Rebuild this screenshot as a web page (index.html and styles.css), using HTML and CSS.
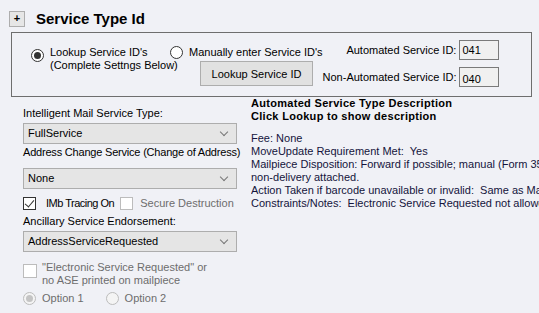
FILE: index.html
```html
<!DOCTYPE html>
<html lang="en">
<head>
    <meta charset="UTF-8">
    <title>Service Type Id</title>
    <link rel="stylesheet" href="styles.css">
</head>
<body>
    <div class="header">
        <button class="expand-btn">+</button>
        <h1 class="title">Service Type Id</h1>
    </div>

    <div class="group-box">
        <div class="col-lookup">
            <span class="radio checked"></span>
            <span class="radio-label">Lookup Service ID's<br>(Complete Settngs Below)</span>
        </div>
        <div class="col-manual">
            <div class="manual-row">
                <span class="radio"></span>
                <span>Manually enter Service ID's</span>
            </div>
            <button class="lookup-btn">Lookup Service ID</button>
        </div>
        <div class="col-ids">
            <div class="id-row">
                <span>Automated Service ID:</span>
                <div class="id-box">041</div>
            </div>
            <div class="id-row">
                <span>Non-Automated Service ID:</span>
                <div class="id-box low">040</div>
            </div>
        </div>
    </div>

    <div class="lower">
        <div class="settings">
            <div class="field-label first">Intelligent Mail Service Type:</div>
            <div class="dropdown">FullService<span class="chevron"></span></div>

            <div class="field-label second">Address Change Service (Change of Address)</div>
            <div class="dropdown gap">None<span class="chevron"></span></div>

            <div class="check-row">
                <span class="checkbox checked"></span>
                <span class="check-text tight">IMb Tracing On</span>
                <span class="checkbox disabled"></span>
                <span class="check-text disabled-text">Secure Destruction</span>
            </div>

            <div class="field-label ase">Ancillary Service Endorsement:</div>
            <div class="dropdown">AddressServiceRequested<span class="chevron"></span></div>

            <div class="esr-row">
                <span class="checkbox disabled"></span>
                <span class="disabled-text">"Electronic Service Requested" or<br>no ASE printed on mailpiece</span>
            </div>

            <div class="option-row">
                <span class="radio disabled checked"></span>
                <span class="disabled-text">Option 1</span>
                <span class="radio disabled second"></span>
                <span class="disabled-text">Option 2</span>
            </div>
        </div>

        <div class="description">
            <div class="desc-title">Automated Service Type Description<br>Click Lookup to show description</div>
            <div class="desc-body">
                <div>Fee: None</div>
                <div>MoveUpdate Requirement Met:&nbsp; Yes</div>
                <div>Mailpiece Disposition: Forward if possible; manual (Form 3547 with reason for</div>
                <div>non-delivery attached.</div>
                <div>Action Taken if barcode unavailable or invalid:&nbsp; Same as Mailpiece Disposition</div>
                <div>Constraints/Notes:&nbsp; Electronic Service Requested not allowed</div>
            </div>
        </div>
    </div>
</body>
</html>
```

FILE: styles.css
```css
body {
    margin: 0;
    width: 539px;
    height: 313px;
    overflow: hidden;
    background-color: #f0f1f6;
    font-family: 'Liberation Sans', Arial, sans-serif;
    font-size: 11px;
    line-height: 13px;
    color: #000;
    white-space: nowrap;
}

.header {
    display: flex;
    align-items: flex-start;
    height: 32px;
    padding: 11px 0 0 9px;
    box-sizing: border-box;
}

.expand-btn {
    width: 16px;
    height: 16px;
    margin: 0;
    padding: 0 0 2px 0;
    background: #e6e6e6;
    border: 1px solid #adadad;
    font-family: 'Liberation Sans', Arial, sans-serif;
    font-size: 11px;
    font-weight: bold;
    line-height: 12px;
    color: #000;
}

.title {
    margin: 0 0 0 11px;
    font-size: 15px;
    font-weight: bold;
    line-height: 17px;
    position: relative;
    top: -1px;
}

.group-box {
    display: flex;
    align-items: flex-start;
    width: 521px;
    height: 65px;
    margin: 0 0 0 11px;
    box-sizing: border-box;
    border: 1px solid #6e6e6e;
}

.col-lookup {
    display: flex;
    align-items: flex-start;
    gap: 6px;
    width: 139px;
    padding: 13px 0 0 19px;
}

.col-lookup .radio {
    margin-top: 3px;
}

.col-manual {
    display: flex;
    flex-direction: column;
    align-items: flex-start;
    padding-top: 12px;
}

.manual-row {
    display: flex;
    align-items: center;
    gap: 6px;
    height: 14px;
}

.lookup-btn {
    width: 113px;
    height: 25px;
    margin: 2px 0 0 30px;
    padding: 0;
    background: #e1e1e1;
    border: 1px solid #adadad;
    font-family: 'Liberation Sans', Arial, sans-serif;
    font-size: 11px;
    color: #000;
}

.col-ids {
    display: flex;
    flex-direction: column;
    align-items: flex-end;
    gap: 7px;
    margin-left: auto;
    margin-right: 33px;
    padding-top: 7px;
}

.id-row {
    display: flex;
    align-items: center;
    gap: 3px;
}

.id-box {
    width: 40px;
    height: 20px;
    box-sizing: border-box;
    padding: 3px 0 0 2px;
    background: #f0f0f0;
    border: 1px solid #7a7a7a;
}

.id-box.low {
    padding-top: 5px;
}

.radio {
    position: relative;
    flex: none;
    width: 13px;
    height: 13px;
    box-sizing: border-box;
    border: 1px solid #333;
    border-radius: 50%;
    background: #fff;
}

.radio.checked::after {
    content: "";
    position: absolute;
    left: 2px;
    top: 2px;
    width: 7px;
    height: 7px;
    border-radius: 50%;
    background: #333;
}

.radio.disabled {
    border-color: #bcbcbc;
    background: #f4f4f4;
}

.radio.disabled.checked::after {
    background: #c4c4c4;
}

.lower {
    display: flex;
}

.settings {
    width: 228px;
    padding-left: 23px;
}

.field-label.first {
    margin-top: 10px;
}

.field-label.second {
    margin-top: 2px;
    letter-spacing: -0.2px;
}

.field-label.ase {
    margin-top: 5px;
}

.dropdown {
    position: relative;
    width: 214px;
    height: 21px;
    margin-top: 3px;
    box-sizing: border-box;
    padding: 3px 0 0 4px;
    background: #e5e5e5;
    border: 1px solid #adadad;
}

.dropdown.gap {
    margin-top: 9px;
}

.chevron {
    position: absolute;
    right: 9px;
    top: 5px;
    width: 5px;
    height: 5px;
    border-right: 1px solid #777;
    border-bottom: 1px solid #777;
    transform: rotate(45deg);
}

.check-row {
    display: flex;
    align-items: center;
    height: 14px;
    margin-top: 7px;
}

.checkbox {
    position: relative;
    flex: none;
    width: 13px;
    height: 13px;
    box-sizing: border-box;
    border: 1px solid #333;
    background: #fff;
}

.checkbox.checked::after {
    content: "";
    position: absolute;
    left: 3px;
    top: 0px;
    width: 4px;
    height: 8px;
    border-right: 1px solid #333;
    border-bottom: 1px solid #333;
    transform: rotate(40deg);
}

.checkbox.disabled {
    border-color: #bcbcbc;
}

.check-text {
    margin-left: 10px;
    margin-right: 6px;
}

.check-text.tight {
    letter-spacing: -0.5px;
}

.check-text.disabled-text {
    margin-left: 7px;
}

.disabled-text {
    color: #6d6d6d;
}

.esr-row {
    display: flex;
    align-items: flex-start;
    gap: 5px;
    margin-top: 9px;
}

.esr-row .checkbox {
    margin-top: 3px;
    width: 14px;
    height: 14px;
}

.option-row {
    display: flex;
    align-items: center;
    height: 14px;
    margin-top: 4px;
}

.option-row .radio {
    margin-right: 6px;
}

.option-row .radio.second {
    margin-left: 22px;
}

.description {
    flex: 1;
    overflow: hidden;
}

.desc-title {
    font-weight: bold;
    letter-spacing: 0.3px;
}

.desc-body {
    margin-top: 9px;
    color: #14143c;
}
```
